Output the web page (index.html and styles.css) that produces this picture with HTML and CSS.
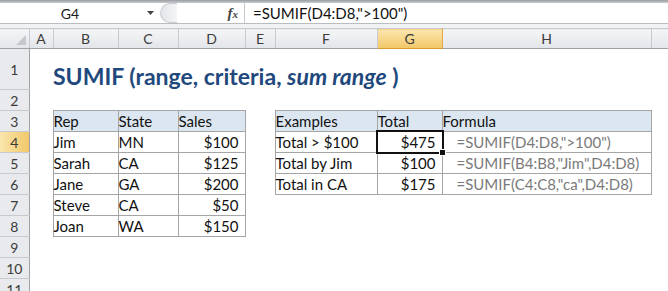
FILE: index.html
```html
<!DOCTYPE html>
<html lang="en">
<head>
    <meta charset="UTF-8">
    <title>SUMIF example</title>
    <link rel="stylesheet" href="styles.css">
</head>
<body>
    <div class="top-edge"></div>
    <div class="formula-bar">
        <div class="name-box">G4</div>
        <div class="name-arrow">
            <svg width="9" height="6" viewBox="0 0 9 6"><path d="M1 1h7L4.5 5z" fill="#444"/></svg>
        </div>
        <div class="knob"></div>
        <div class="fx"><i>f</i><i class="x">x</i></div>
        <div class="formula">=SUMIF(D4:D8,"&gt;100")</div>
    </div>
    <div class="gap"></div>

    <table class="sheet">
        <colgroup>
            <col class="c-hdr"><col class="c-a"><col class="c-b"><col class="c-c"><col class="c-d">
            <col class="c-e"><col class="c-f"><col class="c-g"><col class="c-h"><col class="c-i">
        </colgroup>
        <tr class="r-head">
            <th class="corner">
                <svg width="12" height="12" viewBox="0 0 12 12"><path d="M11 1v10H1z" fill="#c4c8cc"/></svg>
            </th>
            <th class="col-head">A</th>
            <th class="col-head">B</th>
            <th class="col-head">C</th>
            <th class="col-head">D</th>
            <th class="col-head">E</th>
            <th class="col-head">F</th>
            <th class="col-head active">G</th>
            <th class="col-head">H</th>
            <th class="col-head"></th>
        </tr>
        <tr class="r-title">
            <th class="row-head">1</th>
            <td></td>
            <td colspan="7" class="title">SUMIF (range, criteria, <em>sum range</em> )</td>
            <td></td>
        </tr>
        <tr class="r-std">
            <th class="row-head">2</th>
            <td></td><td></td><td></td><td></td><td></td><td></td><td></td><td></td><td></td>
        </tr>
        <tr class="r-std">
            <th class="row-head">3</th>
            <td></td>
            <td class="box hd">Rep</td>
            <td class="box hd">State</td>
            <td class="box hd">Sales</td>
            <td></td>
            <td class="box hd">Examples</td>
            <td class="box hd">Total</td>
            <td class="box hd">Formula</td>
            <td></td>
        </tr>
        <tr class="r-std">
            <th class="row-head active">4</th>
            <td></td>
            <td class="box">Jim</td>
            <td class="box">MN</td>
            <td class="box num">$100</td>
            <td></td>
            <td class="box">Total &gt; $100</td>
            <td class="box num selected">$475<span class="sel-frame"></span><span class="sel-handle"></span></td>
            <td class="box code">=SUMIF(D4:D8,"&gt;100")</td>
            <td></td>
        </tr>
        <tr class="r-std">
            <th class="row-head">5</th>
            <td></td>
            <td class="box">Sarah</td>
            <td class="box">CA</td>
            <td class="box num">$125</td>
            <td></td>
            <td class="box">Total by Jim</td>
            <td class="box num">$100</td>
            <td class="box code">=SUMIF(B4:B8,"Jim",D4:D8)</td>
            <td></td>
        </tr>
        <tr class="r-std">
            <th class="row-head">6</th>
            <td></td>
            <td class="box">Jane</td>
            <td class="box">GA</td>
            <td class="box num">$200</td>
            <td></td>
            <td class="box">Total in CA</td>
            <td class="box num">$175</td>
            <td class="box code">=SUMIF(C4:C8,"ca",D4:D8)</td>
            <td></td>
        </tr>
        <tr class="r-std">
            <th class="row-head">7</th>
            <td></td>
            <td class="box">Steve</td>
            <td class="box">CA</td>
            <td class="box num">$50</td>
            <td></td><td></td><td></td><td></td><td></td>
        </tr>
        <tr class="r-std">
            <th class="row-head">8</th>
            <td></td>
            <td class="box">Joan</td>
            <td class="box">WA</td>
            <td class="box num">$150</td>
            <td></td><td></td><td></td><td></td><td></td>
        </tr>
        <tr class="r-std">
            <th class="row-head">9</th>
            <td></td><td></td><td></td><td></td><td></td><td></td><td></td><td></td><td></td>
        </tr>
        <tr class="r-std">
            <th class="row-head">10</th>
            <td></td><td></td><td></td><td></td><td></td><td></td><td></td><td></td><td></td>
        </tr>
        <tr class="r-std">
            <th class="row-head">11</th>
            <td></td><td></td><td></td><td></td><td></td><td></td><td></td><td></td><td></td>
        </tr>
    </table>
</body>
</html>
```

FILE: styles.css
```css
body {
    margin: 0;
    padding: 0;
    background-color: #ffffff;
    font-family: Lato, "Open Sans", sans-serif;
    overflow: hidden;
}

.top-edge {
    height: 3px;
    background: linear-gradient(#9a9ea3, #c9ccd0);
}

.formula-bar {
    display: flex;
    align-items: center;
    height: 20px;
    border-bottom: 1px solid #b9bcc0;
    background-color: #ffffff;
}

.name-box {
    width: 140px;
    text-align: center;
    font-size: 14px;
    color: #1a1a1a;
}

.name-arrow {
    width: 20px;
    display: flex;
    justify-content: center;
}

.knob {
    width: 16px;
    height: 18px;
    border: 1px solid #c8ccd0;
    border-right: none;
    border-radius: 10px 0 0 10px;
    background: linear-gradient(90deg, #e3e6e9, #f4f5f6);
}

.fx {
    width: 68px;
    height: 20px;
    text-align: right;
    padding-right: 6px;
    box-sizing: border-box;
    border-right: 1px solid #c5c8cc;
    font-family: "Liberation Serif", serif;
    font-size: 15px;
    line-height: 20px;
    color: #444;
}

.fx i {
    font-weight: bold;
}

.fx .x {
    font-size: 11px;
}

.formula {
    padding-left: 8px;
    font-size: 15px;
    color: #111;
}

.gap {
    height: 4px;
    background-color: #f1f2f4;
}

.sheet {
    border-collapse: collapse;
    table-layout: fixed;
    width: 668px;
    font-size: 15px;
    color: #111;
}

.c-hdr { width: 29px; }
.c-a { width: 24px; }
.c-b { width: 65px; }
.c-c { width: 60px; }
.c-d { width: 67px; }
.c-e { width: 30px; }
.c-f { width: 102px; }
.c-g { width: 65px; }
.c-h { width: 209px; }
.c-i { width: 27px; }

.sheet td,
.sheet th {
    padding: 0;
    white-space: nowrap;
    overflow: visible;
}

.r-head th {
    height: 19px;
    font-weight: normal;
    font-size: 14px;
    color: #3b3b3b;
    background: linear-gradient(#f4f5f7, #e2e5e9);
    border-right: 1px solid #c6c9cd;
    border-bottom: 1px solid #9ea2a6;
    border-top: 1px solid #c6c9cd;
}

.corner {
    text-align: right;
    vertical-align: bottom;
    line-height: 0;
}

.corner svg {
    margin: 0 2px 2px 0;
}

.r-head .active {
    background: linear-gradient(#fae6ae, #f2c767);
    border-right-color: #e3a94a;
    border-bottom-color: #d99b35;
}

.row-head {
    font-weight: normal;
    font-size: 14px;
    color: #3b3b3b;
    text-align: center;
    background-color: #e8eaed;
    border-bottom: 1px solid #c6c9cd;
    border-right: 1px solid #9ea2a6;
}

.row-head.active {
    background: linear-gradient(90deg, #fae6ae, #f2c767);
}

.r-title td,
.r-title th {
    height: 40px;
}

.r-std td,
.r-std th {
    height: 20px;
}

.title {
    font-size: 23px;
    font-weight: bold;
    color: #1f497d;
    vertical-align: bottom;
    padding: 0 0 3px 4px;
}

.title em {
    font-style: italic;
}

.box {
    border: 1px solid #a5a5a5;
    padding: 0 5px;
}

.box.hd {
    background-color: #dce6f1;
}

.box.num {
    text-align: right;
    padding-right: 6px;
}

.box.code {
    color: #7a7a7a;
    padding-left: 14px;
}

.selected {
    position: relative;
}

.sel-frame {
    position: absolute;
    left: -2px;
    top: -2px;
    right: -2px;
    bottom: -2px;
    border: 2px solid #111;
}

.sel-handle {
    position: absolute;
    right: -4px;
    bottom: -4px;
    width: 5px;
    height: 5px;
    background-color: #111;
    border: 1px solid #ffffff;
}
```
